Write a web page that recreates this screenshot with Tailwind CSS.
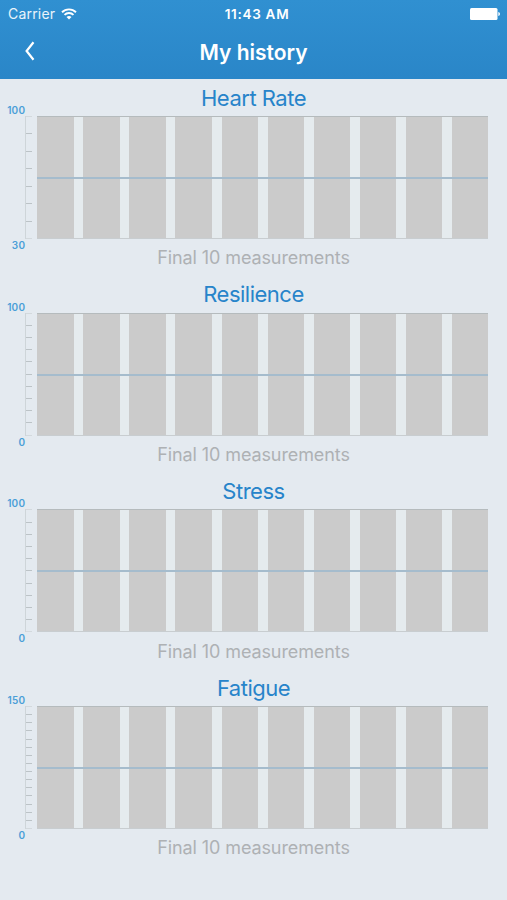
<!DOCTYPE html>
<html lang="en">
<head>
    <meta charset="UTF-8">
    <meta name="viewport" content="width=device-width, initial-scale=1.0">
    <title>My history</title>
    <script src="https://cdn.jsdelivr.net/npm/@tailwindcss/browser@4"></script>
</head>
<body class="h-[900px] overflow-hidden bg-[#e4eaf0] font-['Inter','Liberation_Sans',sans-serif]">
    <header class="h-[79px] bg-linear-to-b from-[#3090d1] to-[#2a86c8] text-white">
        <div class="grid h-[27px] grid-cols-3 items-center pr-[7px] pl-2">
            <div class="flex items-center gap-[6px] text-[14px] tracking-[0.2px]">
                <span class="text-white/90">Carrier</span>
                <svg class="h-[12px] w-[16px]" viewBox="0 0 16 12" fill="none" stroke="white" stroke-width="1.9">
                    <path d="M1 4.2a10 10 0 0 1 14 0M3.5 6.9a6.4 6.4 0 0 1 9 0" />
                    <path d="M8 11.6L5.5 9.1a3.6 3.6 0 0 1 5 0z" fill="white" stroke="none" />
                </svg>
            </div>
            <div class="pt-px pl-[6px] text-center text-[13.5px] font-semibold tracking-[0.7px]">11:43 AM</div>
            <div class="flex justify-end">
                <svg class="h-[12px] w-[30px]" viewBox="0 0 30 12" fill="white">
                    <rect width="27.5" height="12" rx="1.5" />
                    <path d="M28.3 4c2.2.6 2.2 3.4 0 4z" />
                </svg>
            </div>
        </div>
        <div class="grid h-[50px] grid-cols-[60px_1fr_60px] items-center">
            <svg class="mb-[2px] ml-[25px] h-[20px] w-[10px]" viewBox="0 0 10 20" fill="none" stroke="white" stroke-width="2.2">
                <path d="M8.5 1.2L1.6 10l6.9 8.8" />
            </svg>
            <h1 class="pt-[2px] text-center text-[21px] font-semibold">My history</h1>
        </div>
    </header>

    <main id="charts"></main>

    <script>
        const charts = [
            { title: 'Heart Rate', min: 30, max: 100 },
            { title: 'Resilience', min: 0, max: 100 },
            { title: 'Stress', min: 0, max: 100 },
            { title: 'Fatigue', min: 0, max: 150 }
        ];

        // One tick for every 10 units
        function ticks(chart) {
            const count = (chart.max - chart.min) / 10;
            let html = '';
            for (let i = 0; i <= count; i++) {
                const color = i === 0 || i === count ? 'bg-[#d3d9dd]' : 'bg-[#bcc3c7]';
                html += `<div class="h-px w-[6px] ${color}"></div>`;
            }
            return html;
        }

        function render(chart) {
            const bars = '<div class="w-[36.6px] bg-[#cbcbcb]"></div>'.repeat(10);
            return `
            <section class="h-[196.7px]">
                <h2 class="flex h-[37px] items-center justify-center text-[22px] leading-none tracking-[-0.5px] text-[#2784ca]">${chart.title}</h2>
                <div class="flex h-[123px]">
                    <div class="-my-[12px] flex w-[25.2px] flex-col justify-between text-right text-[10px] leading-[12px] font-semibold tracking-[0.2px] text-[#4b9fd8]">
                        <span>${chart.max}</span>
                        <span>${chart.min}</span>
                    </div>
                    <div class="flex w-[12.2px] flex-col justify-between border-l border-[#ced5d9]">${ticks(chart)}</div>
                    <div class="relative flex w-[451px] justify-between border-t border-b border-t-[#b5bbbd] border-b-[#c8cdd0] bg-[#e5ebee]">
                        ${bars}
                        <div class="absolute inset-x-0 top-[60px] h-[2px] bg-[#a5bccd]"></div>
                    </div>
                </div>
                <p class="flex h-[36.7px] items-center justify-center pt-[2px] text-[18px] leading-none tracking-[-0.1px] text-[#aeb1b4]">Final 10 measurements</p>
            </section>`;
        }

        document.getElementById('charts').innerHTML = charts.map(render).join('');
    </script>
</body>
</html>
